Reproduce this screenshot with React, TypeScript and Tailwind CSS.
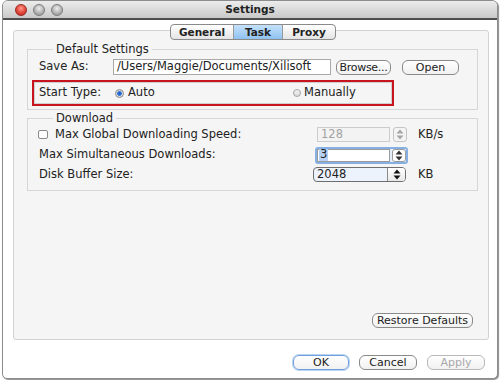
import React from "react";

function Light({ red }: { red?: boolean }) {
  return (
    <div
      className={
        red
          ? "w-[12px] h-[12px] rounded-full border border-[#9a2a22] bg-[radial-gradient(circle_at_50%_35%,#ff9a8c_0%,#e2463a_55%,#b2241b_100%)]"
          : "w-[12px] h-[12px] rounded-full border border-[#7c7c7c] bg-[radial-gradient(circle_at_50%_35%,#eeeeee_0%,#b4b4b4_55%,#8a8a8a_100%)]"
      }
    />
  );
}

function Btn({ children, w, kind }: { children: React.ReactNode; w: string; kind?: "default" | "disabled" }) {
  const base =
    "h-[15px] flex items-center justify-center rounded-[6px] border bg-[linear-gradient(#ffffff,#f1f1f1)] text-[11px] whitespace-nowrap ";
  const style =
    kind === "default"
      ? "border-[#6f9fdc] shadow-[0_0_0_1px_#b9d3f2] text-[#222]"
      : kind === "disabled"
      ? "border-[#b9b9b9] text-[#a8a8a8]"
      : "border-[#8a8a8a] text-[#222]";
  return <div className={base + style + " " + w}>{children}</div>;
}

function Stepper({ dim, strong }: { dim?: boolean; strong?: boolean }) {
  const c = dim ? "#a5a5a5" : strong ? "#111" : "#333";
  return (
    <svg width="8" height="11" viewBox="0 0 8 11">
      <path d="M4 0.5 L7.5 4.5 L0.5 4.5 Z" fill={c} />
      <path d="M4 10.5 L7.5 6.5 L0.5 6.5 Z" fill={c} />
    </svg>
  );
}

export default function App() {
  return (
    <div className="w-[500px] h-[380px] bg-white pl-[2px] pr-[2px] pb-[1px] font-['DejaVu_Sans',sans-serif] text-[11.5px] text-[#222] leading-none">
      <div className="h-full flex flex-col border border-[#8c8c8c] rounded-t-[6px] rounded-b-[5px] overflow-hidden bg-white shadow-[1px_1px_1px_rgba(0,0,0,0.45)]">
        {/* Title bar */}
        <div className="relative h-[19px] shrink-0 border-b-2 border-[#4e4e4e] bg-[linear-gradient(#ececec,#c9c9c9)] flex items-center">
          <div className="flex items-center gap-[6px] pl-[12px]">
            <Light red />
            <Light />
            <Light />
          </div>
          <div className="absolute inset-0 flex items-center justify-center font-bold text-[10.5px] text-[#222]">
            Settings
          </div>
        </div>

        {/* Body */}
        <div className="flex flex-col">
          {/* Tabs */}
          <div className="relative z-10 mt-[4px] flex justify-center pl-[6px]">
            <div className="flex h-[16px] rounded-[4px] border border-[#8a8a8a] overflow-hidden bg-[linear-gradient(#ffffff,#e4e4e4)] text-[10.5px] font-bold text-[#222]">
              <div className="w-[63px] flex items-center justify-center border-r border-[#9a9a9a]">General</div>
              <div className="w-[49px] flex items-center justify-center border-r border-[#9a9a9a] bg-[linear-gradient(#c4e1fb,#8fc2f1)]">
                Task
              </div>
              <div className="w-[52px] flex items-center justify-center">Proxy</div>
            </div>
          </div>

          {/* Pane */}
          <div className="-mt-[10px] ml-[10px] mr-[8px] h-[310px] border border-[#d2d2d2] rounded-[3px] bg-[#f5f5f5] pt-[12px] flex flex-col">
            {/* Default Settings group */}
            <fieldset className="ml-[13px] mr-[10px] border border-[#d6d6d6] pl-[4px] pb-[3px]">
              <legend className="ml-[21px] px-[3px] leading-[13px]">Default Settings</legend>
              <div className="mt-[3px] h-[16px] flex items-center pl-[7px]">
                <div className="w-[74px]">Save As:</div>
                <div className="w-[218px] h-[16px] border border-[#a9a9a9] bg-white flex items-center pl-[3px] overflow-hidden whitespace-nowrap">
                  /Users/Maggie/Documents/Xilisoft
                </div>
                <div className="ml-[5px]">
                  <Btn w="w-[55px] tracking-[-0.3px]">Browse...</Btn>
                </div>
                <div className="ml-[11px]">
                  <Btn w="w-[57px]">Open</Btn>
                </div>
              </div>
              <div className="mt-[5px] w-[362px] h-[26px] border-2 border-[#c8141e] shadow-[inset_0_0_0_1px_#cfcfcf] flex items-center pl-[5px]">
                <div className="w-[76px]">Start Type:</div>
                <div className="flex items-center w-[178px]">
                  <div className="w-[9px] h-[9px] rounded-full border border-[#8a8a8a] bg-[radial-gradient(circle,#1f5fc8_0%,#2f74d8_40%,#d8d8d8_55%,#e9e9e9_100%)]" />
                  <span className="ml-[4px]">Auto</span>
                </div>
                <div className="flex items-center">
                  <div className="w-[8px] h-[8px] rounded-full border border-[#a5a5a5] bg-[linear-gradient(#f4f4f4,#d9d9d9)]" />
                  <span className="ml-[3px]">Manually</span>
                </div>
              </div>
            </fieldset>

            {/* Download group */}
            <fieldset className="mt-[2px] ml-[13px] mr-[10px] border border-[#d6d6d6] pl-[10px] pb-[8px]">
              <legend className="ml-[15px] px-[3px] leading-[13px]">Download</legend>
              <div className="mt-[2px] h-[15px] flex items-center">
                <div className="w-[275px] flex items-center">
                  <div className="w-[10px] h-[9px] rounded-[2px] border border-[#8a8a8a] bg-white" />
                  <span className="ml-[7px]">Max Global Downloading Speed:</span>
                </div>
                <div className="w-[94px] flex items-center">
                  <div className="ml-[4px] w-[73px] h-[15px] border border-[#cccccc] bg-[#f3f3f3] text-[#a3a3a3] flex items-center pl-[3px]">
                    128
                  </div>
                  <div className="ml-[3px] w-[14px] h-[15px] rounded-[3px] border border-[#c4c4c4] bg-[#f4f4f4] flex items-center justify-center">
                    <Stepper dim />
                  </div>
                </div>
                <span className="ml-[11px]">KB/s</span>
              </div>
              <div className="mt-[5px] h-[16px] flex items-center">
                <div className="w-[277px] pl-[1px]">Max Simultaneous Downloads:</div>
                <div className="h-[17px] border-2 border-[#86b0e4] rounded-[3px] flex items-center bg-[#e4eefa]">
                  <div className="w-[73px] h-[13px] border border-[#9b9b9b] bg-white flex items-center pl-[1px]">
                    <span className="bg-[#b5d2f6] px-[1px]">3</span>
                  </div>
                  <div className="ml-[2px] w-[14px] h-[13px] rounded-[3px] border border-[#9b9b9b] bg-white flex items-center justify-center">
                    <Stepper />
                  </div>
                </div>
              </div>
              <div className="mt-[4px] h-[15px] flex items-center">
                <div className="w-[275px] pl-[1px]">Disk Buffer Size:</div>
                <div className="w-[93px] h-[15px] rounded-[4px] border border-[#6e6e6e] bg-[#edf3fc] flex items-center overflow-hidden">
                  <div className="flex-1 pl-[3px]">2048</div>
                  <div className="w-[18px] h-full border-l border-[#8a8a8a] bg-[linear-gradient(#ffffff,#e9e9e9)] flex items-center justify-center">
                    <Stepper strong />
                  </div>
                </div>
                <span className="ml-[12px]">KB</span>
              </div>
            </fieldset>

            <div className="mt-auto mb-[11px] flex justify-end pr-[15px]">
              <Btn w="w-[101px]">Restore Defaults</Btn>
            </div>
          </div>

          {/* Dialog buttons */}
          <div className="mt-[15px] flex justify-end pr-[12px] gap-[10px]">
            <Btn w="w-[56px]" kind="default">
              OK
            </Btn>
            <Btn w="w-[58px]">Cancel</Btn>
            <Btn w="w-[58px]" kind="disabled">
              Apply
            </Btn>
          </div>
        </div>
      </div>
    </div>
  );
}
